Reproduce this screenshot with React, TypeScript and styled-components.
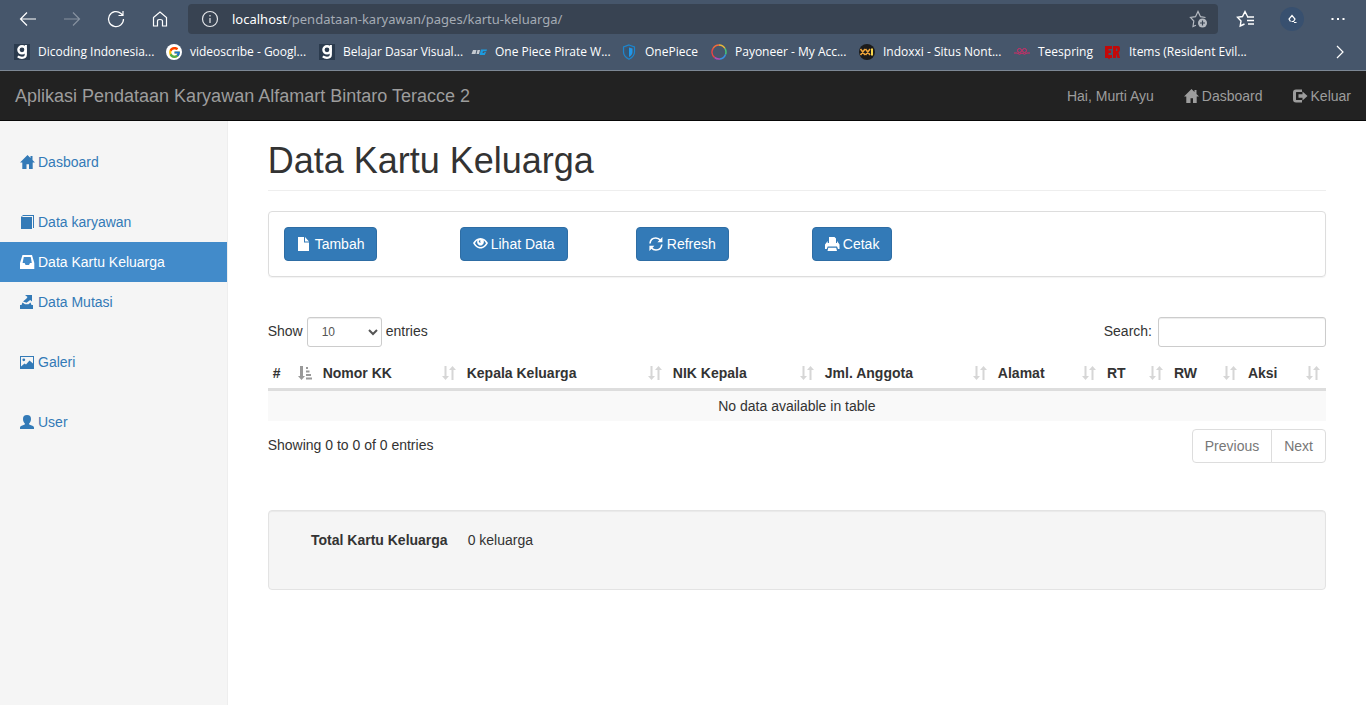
import React from "react";
import styled, { createGlobalStyle, css } from "styled-components";
import { FcGoogle } from "react-icons/fc";

const GlobalStyle = createGlobalStyle`
  *, *::before, *::after { box-sizing: border-box; }
  html, body, #root { height: 100%; }
  body {
    margin: 0;
    background: #fff;
    color: #333;
    font-family: "Liberation Sans", Arial, sans-serif;
    font-size: 14px;
    line-height: 20px;
  }
  button, input, select { font: inherit; }
  a { text-decoration: none; }
  svg { display: block; flex: none; }
`;

/* ---------- icons ---------- */

type IconName =
  | "home" | "book" | "inbox" | "export" | "picture" | "user" | "logout"
  | "file" | "eye" | "refresh" | "print" | "sort" | "sortAsc";

const shapes: Record<IconName, React.ReactNode> = {
  home: <path d="M7.500 0 10.500 3V1H12.500V5L15 7.600H12.700V14H9V9.300H6.500V14H2.300V7.600H0Z" />,
  book: <path d="M3 0H14V13H13V1H2.600L2 2H12V14H1V2Z" />,
  inbox: <path fillRule="evenodd" d="M2.500 0H12L14.300 8V14H0V8ZM3.800 2 2.600 8H4.600L5.600 10H9L10 8H11.800L10.700 2Z" />,
  export: <path d="M5 0H12V6.500L10.200 5 6.500 7.800 3 6.500 6.500 3.500 7.500 2ZM0 10H1.500L2.500 7.500 5 9.300H8.500L10.500 7.500 11.500 10H13V14H0Z" />,
  picture: <path fillRule="evenodd" d="M0 1H14V14H0ZM1 2V11.500L4.500 8.500 6 9.500 9.500 5.500 13 8.600V2ZM3.800 3.400a1.400 1.400 0 1 1 0 2.800 1.400 1.400 0 0 1 0-2.800Z" />,
  user: <path d="M7 0C9.800 0 11 1.600 11 4S10 7.600 9.200 8.300V9.600L13 11Q14 11.500 14 12.500V14H0V12.500Q0 11.500 1 11L4.800 9.600V8.300C4 7.600 3 6.400 3 4S4.200 0 7 0Z" />,
  logout: <path d="M9 0.500V3H3.500Q3 3 3 3.500V10.500Q3 11 3.500 11H9V13.500H3Q0 13.500 0 10.500V3.500Q0 0.500 3 0.500ZM9.500 2.500 14.500 7 9.500 11.500V8.800H5.500V5.200H9.500Z" />,
  file: <path d="M1 0H7V5.500H12V14H1ZM8 0 12 4.500H8Z" />,
  eye: (
    <path
      fillRule="evenodd"
      d="M7.500 1C11 1 13.500 3.500 15 6 13.500 8.800 11 11.500 7.500 11.500S1.500 8.800 0 6C1.500 3.500 4 1 7.500 1ZM2 6.200C3.200 8.300 5.200 10 7.500 10S11.800 8.300 13 6.200C12.300 5 11.500 4 10.600 3.300 11.600 6 9.800 8.600 7.500 8.600S3.400 6 4.400 3.300C3.500 4 2.700 5 2 6.200ZM5.700 4.600Q6.300 6.200 7.700 5.400 6.800 4.200 7.400 3 6 3.200 5.700 4.600Z"
    />
  ),
  refresh: (
    <>
      <path d="M1 6.500C1.300 3.200 3.600 1 6.800 1 9 1 10.400 2 11.500 3.300M12.800 7.500C12.500 10.800 10.200 13 7 13 4.800 13 3.400 12 2.300 10.700" fill="none" stroke="currentColor" strokeWidth="1.600" />
      <path d="M13.400 0V5.200H8.400ZM0.400 14V8.800H5.400Z" />
    </>
  ),
  print: <path fillRule="evenodd" d="M4 0H9.500L11 1.500V6H12V4L14.500 7.500V12H13L12 9.500H2.700L1.700 12H0V7.500L2.700 4V6H4ZM3.300 10.700H11.200L12 14H2.500Z" />,
  sort: <path d="M2.500 0H4.500V10H7L3.500 14 0 10H2.500ZM10.500 0 14 4H11.500V14H9.500V4H7Z" />,
  sortAsc: <path d="M2 0H5V10H7L3.500 14 0 10H2ZM8 1H10V3H8ZM8 4.500H11.500V6.500H8ZM8 8H13V10H8ZM8 11.500H14V13.500H8Z" />,
};

const Glyph = ({ name }: { name: IconName }) => (
  <svg width="15" height="14" viewBox="0 0 15 14" fill="currentColor" aria-hidden="true">
    {shapes[name]}
  </svg>
);

const Line = ({ children, size = 20 }: { children: React.ReactNode; size?: number }) => (
  <svg width={size} height={size} viewBox={`0 0 ${size} ${size}`} fill="none" stroke="currentColor" strokeWidth="1.200" aria-hidden="true">
    {children}
  </svg>
);

const Favicon = ({ children }: { children: React.ReactNode }) => (
  <svg width="16" height="16" viewBox="0 0 16 16" aria-hidden="true">
    {children}
  </svg>
);

const DicodingIcon = () => (
  <Favicon>
    <path d="M0 0H16V16H0Z" fill="#2b3b4e" />
    <circle cx="8" cy="5.800" r="3.600" fill="none" stroke="#fff" strokeWidth="2.400" />
    <path d="M11.800 1V10.500Q11.800 13.800 8 13.800 5.500 13.800 3.800 12.400" fill="none" stroke="#fff" strokeWidth="2.200" />
  </Favicon>
);

const GoogleBadge = styled.span`
  display: grid;
  place-items: center;
  flex: none;
  width: 16px;
  height: 16px;
  border-radius: 50%;
  background: #fff;
`;

/* ---------- browser bars ---------- */

const Browser = styled.header`
  border-bottom: 1px solid #7c8794;
  background: #46566b;
  color: #fff;
  font-family: "Open Sans", "Noto Sans", sans-serif;
`;

const Toolbar = styled.div`
  display: flex;
  align-items: center;
  height: 38px;
  padding: 0 18px;
  gap: 24px;
`;

const ToolButton = styled.button<{ $dim?: boolean }>`
  display: grid;
  place-items: center;
  width: 20px;
  height: 20px;
  padding: 0;
  border: 0;
  background: none;
  color: ${(p) => (p.$dim ? "#8792a0" : "#fff")};
`;

const AddressBar = styled.div`
  display: flex;
  flex: 1;
  align-items: center;
  gap: 12px;
  height: 30px;
  margin: 0 -6px;
  padding: 0 9px 0 12px;
  border-radius: 4px;
  background: #384352;
  color: #b5bac1;
  font-family: "Noto Sans", "Open Sans", sans-serif;
  font-size: 13px;
`;

const Address = styled.div`
  flex: 1;
  color: #a5acb5;
  white-space: nowrap;
`;

const Host = styled.span`
  color: #fff;
`;

const Profile = styled.span`
  display: grid;
  place-items: center;
  width: 24px;
  height: 24px;
  border-radius: 50%;
  background: #38506f;
`;

const Bookmarks = styled.nav`
  display: flex;
  align-items: center;
  height: 32px;
  padding: 0 16px 4px 14px;
`;

const Bookmark = styled.a<{ $width: number }>`
  display: flex;
  align-items: center;
  gap: 8px;
  width: ${(p) => p.$width}px;
  color: #fff;
  font-size: 12px;
  white-space: nowrap;
`;

const More = styled(ToolButton)`
  margin-left: auto;
`;

const bookmarks: { label: string; width: number; icon: React.ReactNode }[] = [
  { label: "Dicoding Indonesia...", width: 152, icon: <DicodingIcon /> },
  { label: "videoscribe - Googl...", width: 153, icon: <GoogleBadge><FcGoogle size={13} /></GoogleBadge> },
  { label: "Belajar Dasar Visual...", width: 152, icon: <DicodingIcon /> },
  {
    label: "One Piece Pirate W...", width: 150,
    icon: (
      <Favicon>
        <path d="M2 6H5.500L4.500 10H0.500ZM6.500 6H9L8 10H5.500Z" fill="#c4cad1" />
        <path d="M10 5.500H16L15.400 7.200H12L11.500 9H13L13.500 8H15L13.800 11H8.500Z" fill="#1c9be0" />
      </Favicon>
    ),
  },
  {
    label: "OnePiece", width: 90,
    icon: (
      <Favicon>
        <path d="M8 1 13.500 3V8Q13.500 12.500 8 15.300 2.500 12.500 2.500 8V3Z" fill="none" stroke="#1b86cf" strokeWidth="1.200" />
        <path d="M8 3.500 11.500 4.600V8Q11.500 11 8 13Z" fill="#2196e8" />
        <path d="M8 3.500 4.500 4.600V8Q4.500 11 8 13Z" fill="#315777" />
      </Favicon>
    ),
  },
  {
    label: "Payoneer - My Acc...", width: 148,
    icon: (
      <Favicon>
        <g fill="none" strokeWidth="1.500">
          <path d="M8 1A7 7 0 0 1 14 4.500" stroke="#e8b83a" />
          <path d="M14 4.500A7 7 0 0 1 14.500 10.500" stroke="#45c47c" />
          <path d="M14.500 10.500A7 7 0 0 1 9 15" stroke="#3b8fe0" />
          <path d="M9 15A7 7 0 0 1 3.500 13.400" stroke="#b14bb8" />
          <path d="M3.500 13.400A7 7 0 0 1 2 4.500" stroke="#ef4444" />
          <path d="M2 4.500A7 7 0 0 1 8 1" stroke="#f36b3b" />
        </g>
      </Favicon>
    ),
  },
  {
    label: "Indoxxi - Situs Nont...", width: 155,
    icon: (
      <Favicon>
        <circle cx="8" cy="8" r="8" fill="#1c1b1a" />
        <path d="M1.500 5 6 11M6 5 1.500 11M6.500 5 11 11M11 5 6.500 11" stroke="#f0a63a" strokeWidth="1.500" />
        <path d="M13 4.500V11.500" stroke="#f7d54a" strokeWidth="2" />
      </Favicon>
    ),
  },
  {
    label: "Teespring", width: 91,
    icon: (
      <Favicon>
        <g fill="none" stroke="#d62a66" strokeWidth="1">
          <circle cx="5.500" cy="6.500" r="2" />
          <circle cx="10.500" cy="6.500" r="2" />
          <path d="M0 9H3Q5.500 11.500 8 9 10.500 11.500 13 9H16" />
        </g>
      </Favicon>
    ),
  },
  {
    label: "Items (Resident Evil...", width: 150,
    icon: (
      <Favicon>
        <path fillRule="evenodd" d="M0 2H7V5H3.500V6.500H6V9H3.500V11H7V14H5L4 15.500 3 14H0ZM8 2H13Q15 2 15 5 15 8 13.500 8.500L15 14H12.500L11 9.500V14H8ZM11 4.500V7H12.300V4.500Z" fill="#c40808" />
      </Favicon>
    ),
  },
];

/* ---------- application bar ---------- */

const AppBar = styled.header`
  display: flex;
  align-items: center;
  justify-content: space-between;
  height: 50px;
  border-bottom: 1px solid #080808;
  background: #222;
  color: #9d9d9d;
`;

const Brand = styled.a`
  padding: 0 15px;
  color: inherit;
  font-size: 18px;
`;

const AppNav = styled.nav`
  display: flex;
`;

const AppLink = styled.a`
  display: flex;
  align-items: center;
  gap: 3px;
  padding: 15px;
  color: inherit;
`;

/* ---------- page frame ---------- */

const Screen = styled.div`
  display: flex;
  flex-direction: column;
  min-height: 100%;
`;

const Body = styled.div`
  display: grid;
  grid-template-columns: 1fr 5fr;
  flex: 1;
`;

const Sidebar = styled.nav`
  padding: 21px 0 20px;
  border-right: 1px solid #eee;
  background: #f5f5f5;
`;

const Group = styled.div`
  margin-bottom: 20px;
`;

const SideLink = styled.a<{ $active?: boolean }>`
  display: flex;
  align-items: center;
  gap: 3px;
  padding: 10px 20px;
  color: #337ab7;
  ${(p) => p.$active && css`
    background: #428bca;
    color: #fff;
  `}
`;

const Main = styled.main`
  min-width: 0;
  padding: 20px 40px;
`;

const Title = styled.h1`
  margin: 0 0 20px;
  padding-bottom: 9px;
  border-bottom: 1px solid #eee;
  font-size: 36px;
  font-weight: 400;
  line-height: 40px;
`;

const Panel = styled.section`
  display: grid;
  grid-template-columns: repeat(6, 1fr);
  margin-bottom: 40px;
  padding: 15px 0;
  border: 1px solid #ddd;
  border-radius: 4px;
  box-shadow: 0 1px 1px rgba(0, 0, 0, 0.05);
`;

const ActionCell = styled.div`
  padding: 0 15px;
`;

const Action = styled.button`
  display: flex;
  align-items: center;
  gap: 3px;
  height: 34px;
  padding: 0 12px;
  border: 1px solid #2e6da4;
  border-radius: 4px;
  background: #337ab7;
  color: #fff;
  white-space: nowrap;
`;

/* ---------- data table ---------- */

const Controls = styled.div`
  display: flex;
  justify-content: space-between;
  margin-bottom: 11px;
  line-height: 28px;
`;

const Control = styled.label<{ $gap: number }>`
  display: flex;
  align-items: flex-start;
  gap: ${(p) => p.$gap}px;
`;

const fieldStyle = css`
  height: 30px;
  border: 1px solid #ccc;
  border-radius: 3px;
  background: #fff;
  color: #555;
  font-size: 12px;
  line-height: 18px;
  box-shadow: inset 0 1px 1px rgba(0, 0, 0, 0.075);
`;

const LengthSelect = styled.select`
  ${fieldStyle}
  width: 75px;
  padding: 5px 10px;
`;

const SearchInput = styled.input`
  ${fieldStyle}
  width: 168px;
  padding: 5px 10px;
`;

const Table = styled.table`
  width: 100%;
  table-layout: fixed;
  border-collapse: separate;
  border-spacing: 0;
`;

const HeadCell = styled.th`
  padding: 5px;
  border-bottom: 3px solid #ddd;
`;

const SortButton = styled.button`
  display: flex;
  align-items: center;
  justify-content: space-between;
  width: 100%;
  height: 20px;
  padding: 0;
  border: 0;
  background: none;
  color: inherit;
  font-weight: 700;
  white-space: nowrap;
`;

const SortMark = styled.span<{ $active: boolean }>`
  color: ${(p) => (p.$active ? "#999" : "#d6d6d6")};
`;

const EmptyCell = styled.td`
  padding: 5px;
  background: #f9f9f9;
  text-align: center;
`;

const TableFoot = styled.div`
  display: flex;
  justify-content: space-between;
  margin: 8px 0 47px;
  line-height: 32px;
`;

const Pager = styled.div`
  display: flex;
`;

const PageButton = styled.button`
  height: 34px;
  padding: 0 12px;
  border: 1px solid #ddd;
  background: #fff;
  color: #777;
  &:first-child { border-radius: 4px 0 0 4px; }
  &:last-child { margin-left: -1px; border-radius: 0 4px 4px 0; }
`;

const Well = styled.dl`
  display: grid;
  grid-template-columns: 160px 1fr;
  column-gap: 20px;
  margin: 0;
  padding: 19px 19px 39px;
  border: 1px solid #e3e3e3;
  border-radius: 4px;
  background: #f5f5f5;
  box-shadow: inset 0 1px 1px rgba(0, 0, 0, 0.05);
`;

const Term = styled.dt`
  font-weight: 700;
  text-align: right;
`;

const Value = styled.dd`
  margin: 0;
`;

const menu: { label: string; icon: IconName }[][] = [
  [{ label: "Dasboard", icon: "home" }],
  [
    { label: "Data karyawan", icon: "book" },
    { label: "Data Kartu Keluarga", icon: "inbox" },
    { label: "Data Mutasi", icon: "export" },
  ],
  [{ label: "Galeri", icon: "picture" }],
  [{ label: "User", icon: "user" }],
];

const actions: { label: string; icon: IconName }[] = [
  { label: "Tambah", icon: "file" },
  { label: "Lihat Data", icon: "eye" },
  { label: "Refresh", icon: "refresh" },
  { label: "Cetak", icon: "print" },
];

const columns: [string, number][] = [
  ["#", 50], ["Nomor KK", 144], ["Kepala Keluarga", 206], ["NIK Kepala", 152], ["Jml. Anggota", 173],
  ["Alamat", 109], ["RT", 67], ["RW", 74], ["Aksi", 83],
];

const Column = styled.col<{ $width: number }>`
  width: ${(p) => p.$width}px;
`;

const BrowserBars = () => (
  <Browser>
    <Toolbar>
      <ToolButton aria-label="Back"><Line><path d="M2 10H18M9 3.500 2.500 10 9 16.500" /></Line></ToolButton>
      <ToolButton $dim aria-label="Forward"><Line><path d="M2 10H18M11 3.500 17.500 10 11 16.500" /></Line></ToolButton>
      <ToolButton aria-label="Reload"><Line><path d="M17.500 10A7.500 7.500 0 1 1 15 4.500L17 6.500M17 2V6.500H12.500" /></Line></ToolButton>
      <ToolButton aria-label="Home"><Line><path d="M3.500 8.500 10 3 16.500 8.500V17H12.500V12Q12.500 10.500 10 10.500T7.500 12V17H3.500Z" /></Line></ToolButton>
      <AddressBar>
        <Line><circle cx="10" cy="10" r="7.500" stroke="#e4e6e9" /><path d="M10 9V14M10 6V7.500" stroke="#e4e6e9" /></Line>
        <Address><Host>localhost</Host>/pendataan-karyawan/pages/kartu-keluarga/</Address>
        <Line>
          <path d="M7 16.300 4 17.500 4.800 12 1.500 8.500 6.500 7.700 9 2.500 11.500 7.700 16.500 8.500" />
          <circle cx="13.500" cy="14" r="4.500" fill="currentColor" stroke="none" />
          <path d="M11 14H16M13.500 11.500V16.500" stroke="#384352" />
        </Line>
      </AddressBar>
      <ToolButton aria-label="Favorites"><Line><path d="M11.500 7.500 9 2.500 6.500 7.500 1.500 8.300 5 12 4.200 17 8.500 15M11 8H18M11 11.500H18M12 15H18" strokeWidth="1.400" /></Line></ToolButton>
      <Profile>
        <Line size={16}><path d="M6.500 10.500 5 8 8 4.500 11 8 9.500 10.500 7.500 10.500M10 11.500H12.500" /></Line>
      </Profile>
      <ToolButton aria-label="Settings">
        <Line><path d="M3.500 10H5.500M9 10H11M14.500 10H16.500" strokeWidth="2" /></Line>
      </ToolButton>
    </Toolbar>
    <Bookmarks aria-label="Bookmarks">
      {bookmarks.map((b) => (
        <Bookmark key={b.label} href="#" $width={b.width}>{b.icon}{b.label}</Bookmark>
      ))}
      <More aria-label="More bookmarks"><Line><path d="M7 4 13 10 7 16" /></Line></More>
    </Bookmarks>
  </Browser>
);

export default function App() {
  return (
    <Screen>
      <GlobalStyle />
      <BrowserBars />
      <AppBar>
        <Brand href="#">Aplikasi Pendataan Karyawan Alfamart Bintaro Teracce 2</Brand>
        <AppNav>
          <AppLink href="#">Hai, Murti Ayu</AppLink>
          <AppLink href="#"><Glyph name="home" />Dasboard</AppLink>
          <AppLink href="#"><Glyph name="logout" />Keluar</AppLink>
        </AppNav>
      </AppBar>
      <Body>
        <Sidebar>
          {menu.map((group) => (
            <Group key={group[0].label}>
              {group.map((item) => (
                <SideLink key={item.label} href="#" $active={item.label === "Data Kartu Keluarga"}>
                  <Glyph name={item.icon} />{item.label}
                </SideLink>
              ))}
            </Group>
          ))}
        </Sidebar>
        <Main>
          <Title>Data Kartu Keluarga</Title>
          <Panel>
            {actions.map((a) => (
              <ActionCell key={a.label}>
                <Action type="button"><Glyph name={a.icon} />{a.label}</Action>
              </ActionCell>
            ))}
          </Panel>
          <Controls>
            <Control $gap={4}>
              Show
              <LengthSelect defaultValue="10">
                <option>10</option>
                <option>25</option>
                <option>50</option>
                <option>100</option>
              </LengthSelect>
              entries
            </Control>
            <Control $gap={6}>Search:<SearchInput type="search" /></Control>
          </Controls>
          <Table>
            <colgroup>
              {columns.map(([label, width]) => <Column key={label} $width={width} />)}
            </colgroup>
            <thead>
              <tr>
                {columns.map(([label], i) => (
                  <HeadCell key={label} scope="col">
                    <SortButton type="button">
                      {label}
                      <SortMark $active={i === 0}><Glyph name={i === 0 ? "sortAsc" : "sort"} /></SortMark>
                    </SortButton>
                  </HeadCell>
                ))}
              </tr>
            </thead>
            <tbody>
              <tr><EmptyCell colSpan={columns.length}>No data available in table</EmptyCell></tr>
            </tbody>
          </Table>
          <TableFoot>
            Showing 0 to 0 of 0 entries
            <Pager>
              <PageButton type="button">Previous</PageButton>
              <PageButton type="button">Next</PageButton>
            </Pager>
          </TableFoot>
          <Well>
            <Term>Total Kartu Keluarga</Term>
            <Value>0 keluarga</Value>
          </Well>
        </Main>
      </Body>
    </Screen>
  );
}
